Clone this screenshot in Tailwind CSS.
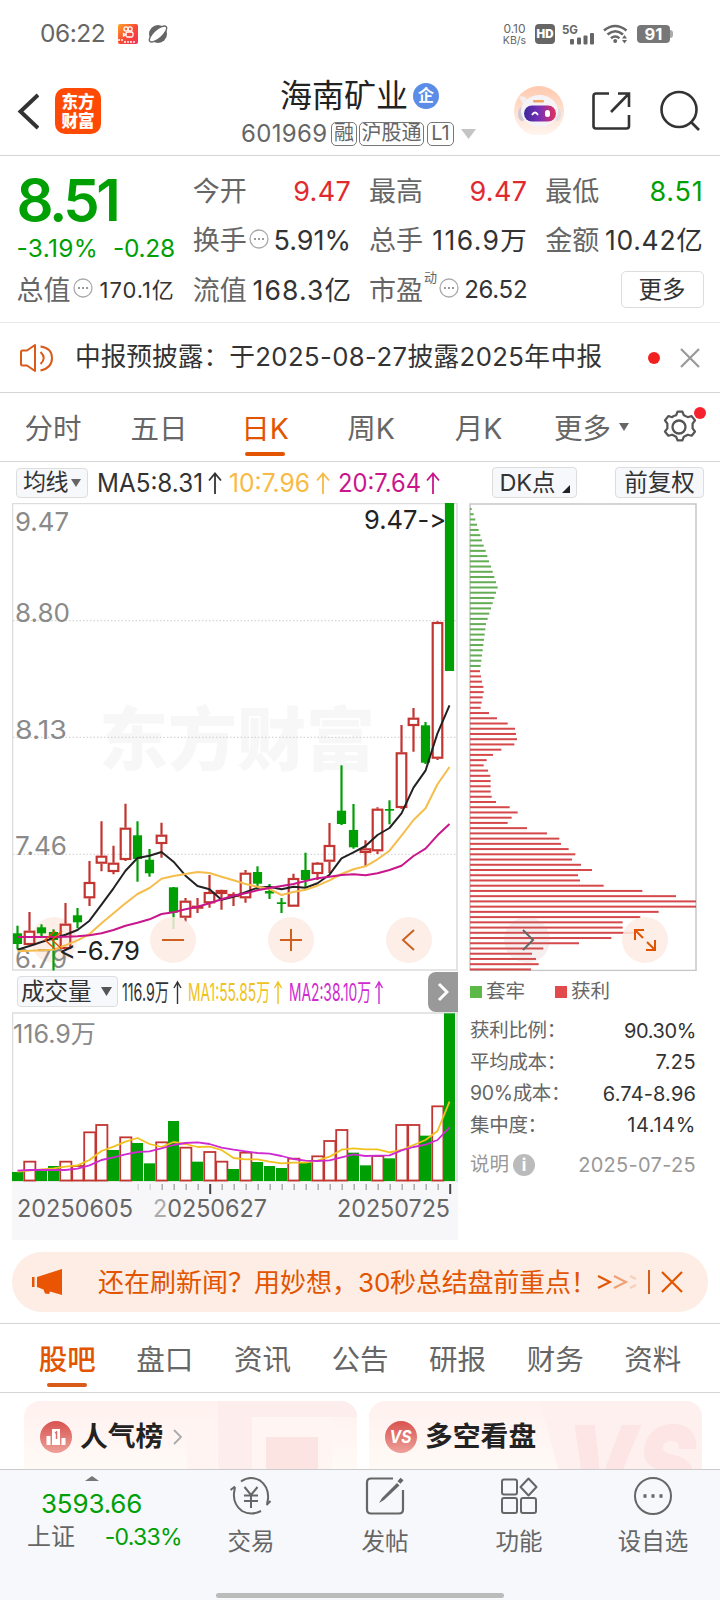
<!DOCTYPE html>
<html lang="zh-CN">
<head>
    <meta charset="UTF-8">
    <title>海南矿业 601969</title>
    <script src="https://cdn.jsdelivr.net/npm/@tailwindcss/browser@4"></script>
</head>
<body class="w-[720px] h-[1600px] overflow-hidden bg-white text-[#333] font-[Inter,'Noto_Sans_CJK_SC',sans-serif]">

    <!-- Status bar -->
    <div class="h-[68px] flex items-center pl-10 pr-[46px] text-[#666]">
        <span class="text-[24.500px] leading-none w-[66px] tracking-[-0.500px] whitespace-nowrap -mt-px">06:22</span>
        <svg class="ml-3 w-5 h-5" viewBox="0 0 20 20">
            <defs><linearGradient id="app" x1="0" x2="1" y2="1"><stop stop-color="#fda52c"/><stop offset=".5" stop-color="#fa4b32"/><stop offset="1" stop-color="#f52f54"/></linearGradient></defs>
            <rect width="20" height="20" rx="2" fill="url(#app)"/>
            <g fill="none" stroke="#fff" stroke-width="1.3"><circle cx="8" cy="5" r="2.1"/><circle cx="12" cy="5" r="2.1"/><rect x="8" y="8" width="7" height="5" rx="1.5"/><path d="M5.500 9.500l2 1-2 1.500z"/></g>
            <path d="M0 16h5M6 18h12" stroke="#fff" stroke-width="1.500" stroke-dasharray="2 1"/>
        </svg>
        <svg class="ml-2.5 w-5 h-5" viewBox="0 0 20 20">
            <circle cx="10" cy="10" r="9" fill="#666"/>
            <ellipse cx="10" cy="10" rx="11" ry="4.300" transform="rotate(-42 10 10)" fill="#fff" stroke="#666" stroke-width="1.400"/>
        </svg>
        <div class="ml-auto text-[12px] leading-[11px] text-center w-[25px] whitespace-nowrap">0.10<br><span class="text-[10.5px]">KB/s</span></div>
        <div class="ml-[8px] w-5 h-5 rounded-[4px] bg-[#666] text-white text-[11.500px] font-black leading-5 text-center">HD</div>
        <svg class="ml-[7px] w-[33px] h-[21px]" viewBox="0 0 33 21" fill="#666">
            <text x="0" y="9.500" font-size="12" font-weight="700" textLength="16" lengthAdjust="spacingAndGlyphs">5G</text>
            <rect x="8" y="15" width="4" height="5.500" rx="1"/><rect x="15" y="13.500" width="4" height="7" rx="1"/><rect x="21.500" y="11.500" width="4" height="9" rx="1"/><rect x="28" y="9" width="4" height="11.500" rx="1"/>
        </svg>
        <svg class="ml-2 w-[25px] h-5" viewBox="0 0 25 20">
            <g fill="none" stroke="#666" stroke-width="2.600"><path d="M1 6.500q11-9 22.500 0"/><path d="M4.500 10.500q8-6.500 15.500 0"/><path d="M8 14.200q4.200-3.400 8.400 0"/></g>
            <circle cx="12.200" cy="17" r="2" fill="#666"/><path d="M21.500 11l2.500 3.500h-5zM21.500 19.500l2.500-3.500h-5z" fill="#666"/>
        </svg>
        <div class="ml-[9px] mr-px w-[33px] h-[18px] rounded-[4px] bg-[#777] text-white text-[16.500px] font-bold leading-[18px] text-center">91</div>
        <div class="-ml-px mr-px w-[3px] h-2 rounded-r bg-[#aaa]"></div>
    </div>

    <!-- Header -->
    <header class="h-[88px] border-b border-[#d4d4d4] flex">
        <svg class="mt-6 ml-[17px] w-[22px] h-[38px]" viewBox="0 0 22 38" fill="none" stroke="#333" stroke-width="4"><path d="M21 3L3.500 19.500 21 36"/></svg>
        <div class="mt-5 ml-4 w-[46px] h-[46px] rounded-[10px] bg-[#ff4a06] text-white text-[16.500px] font-black leading-[19px] text-center pt-[4px] font-['Noto_Sans_CJK_SC',sans-serif]">东方<br>财富</div>
        <div class="ml-[139px] w-[240px]">
            <div class="flex items-center ml-[40px] h-[55px]">
                <h1 class="text-[32px] text-[#222] leading-none whitespace-nowrap">海南矿业</h1>
                <span class="ml-[5px] w-[26px] h-[26px] rounded-full bg-[#5b8ce8] text-white text-[16px] font-bold leading-[25px] text-center">企</span>
            </div>
            <div class="flex items-center h-6 -mt-px text-[#666] text-[24px] leading-none whitespace-nowrap">
                <span class="w-[91px] tracking-[0.350px] pl-px">601969</span>
                <span class="h-6 w-[26px] border border-[#777] rounded-[5px] text-[20px] leading-[21px] text-center">融</span>
                <span class="ml-[2px] h-6 w-[65px] border border-[#777] rounded-[5px] text-[20px] leading-[21px] text-center">沪股通</span>
                <span class="ml-[3px] h-6 w-[27px] border border-[#777] rounded-[5px] text-[20px] leading-[21px] text-center">L1</span>
                <svg class="ml-[7px] w-[15px] h-2.5 shrink-0" viewBox="0 0 15 10"><path d="M0 0h15L7.500 10z" fill="#c4c4c4"/></svg>
            </div>
        </div>
        <svg class="mt-[17px] ml-[33px] w-[52px] h-[50px] shrink-0" viewBox="0 0 52 50">
            <defs>
                <linearGradient id="halo" y2="1" x2="0"><stop stop-color="#ffc9ae"/><stop offset="1" stop-color="#fff6f0"/></linearGradient>
                <linearGradient id="visor"><stop stop-color="#3b2a9c"/><stop offset=".5" stop-color="#7b2fb5"/><stop offset="1" stop-color="#e8305a"/></linearGradient>
            </defs>
            <circle cx="26" cy="26" r="25" fill="url(#halo)"/>
            <ellipse cx="9" cy="29" rx="4" ry="7" fill="#cfc9d6"/><ellipse cx="44" cy="29" rx="4" ry="7" fill="#e4dde2"/>
            <path d="M6 12q5-2 8 2l-4 5z" fill="#f3eef0"/>
            <ellipse cx="26.500" cy="26" rx="18.500" ry="16" fill="#f6f3f6"/>
            <rect x="20" y="15" width="11" height="2.500" rx="1" fill="#f0a565"/>
            <rect x="11" y="20.500" width="32" height="16" rx="8" fill="url(#visor)"/>
            <path d="M19 30q3-5 6 0" stroke="#fff" stroke-width="1.800" fill="none"/><rect x="32" y="25" width="5" height="7" rx="2.500" fill="#fff"/>
        </svg>
        <svg class="mt-[22px] ml-[26px] w-[42px] h-[42px] shrink-0" viewBox="0 0 42 42" fill="none" stroke="#333" stroke-width="2.600"><path d="M18 3.500H5Q2.500 3.500 2.500 6v30q0 2.500 2.500 2.500h30.500q2.500 0 2.500-2.500V25"/><path d="M27 3.500h11V17M38 3.500L20 22"/></svg>
        <svg class="mt-[22px] ml-[26px] w-[42px] h-[42px] shrink-0" viewBox="0 0 42 42" fill="none" stroke="#333" stroke-width="2.600"><circle cx="20" cy="19.500" r="17.500"/><path d="M32 32l8 8"/></svg>
    </header>

    <!-- Quote -->
    <section class="h-[167px] border-b border-[#e8e8e8] px-[16.500px] pt-[11px] grid grid-cols-4 grid-rows-[49px_49px_50px] gap-x-[18px] text-[27px] leading-none whitespace-nowrap">
        <div class="row-span-2 text-[#00a005]">
            <div class="text-[58px] font-semibold h-[65px] pt-[4px] tracking-[-3.500px]">8.51</div>
            <div class="flex justify-between text-[24.500px] pt-[4px]"><span class="tracking-[0.300px]">-3.19%</span><span class="tracking-[-0.300px]">-0.28</span></div>
        </div>
        <div class="flex items-center justify-between"><span class="text-[#666]">今开</span><span class="text-[#e12a2e] tracking-[0.300px]">9.47</span></div>
        <div class="flex items-center justify-between"><span class="text-[#666]">最高</span><span class="text-[#e12a2e] tracking-[0.300px]">9.47</span></div>
        <div class="flex items-center justify-between"><span class="text-[#666]">最低</span><span class="text-[#00a005] tracking-[0.800px]">8.51</span></div>
        <div class="flex items-center justify-between"><span class="flex items-center text-[#666]">换手<svg class="w-5 h-5 ml-[2px] -mt-1" viewBox="0 0 20 20"><circle cx="10" cy="10" r="9" fill="none" stroke="#aaa" stroke-width="1.300"/><path d="M5 10h2M9 10h2M13 10h2" stroke="#999" stroke-width="1.800"/></svg></span><span>5.91%</span></div>
        <div class="flex items-center justify-between"><span class="text-[#666]">总手</span><span class="text-[26.500px] tracking-[1.400px] -mr-[1px]">116.9万</span></div>
        <div class="flex items-center justify-between"><span class="text-[#666]">金额</span><span class="text-[26.500px] tracking-[0.700px]">10.42亿</span></div>
        <div class="flex items-center justify-between"><span class="flex items-center text-[#666]">总值<svg class="w-5 h-5 ml-[2px] -mt-1" viewBox="0 0 20 20"><circle cx="10" cy="10" r="9" fill="none" stroke="#aaa" stroke-width="1.300"/><path d="M5 10h2M9 10h2M13 10h2" stroke="#999" stroke-width="1.800"/></svg></span><span class="text-[22px] tracking-[0.900px]">170.1亿</span></div>
        <div class="flex items-center justify-between"><span class="text-[#666]">流值</span><span class="text-[26.500px] tracking-[1.100px] -mr-[1px]">168.3亿</span></div>
        <div class="flex items-center justify-between"><span class="flex items-center text-[#666]">市盈<span class="text-[13px] self-start -mt-1.5 ml-px">动</span><svg class="w-5 h-5 ml-[2px] -mt-1" viewBox="0 0 20 20"><circle cx="10" cy="10" r="9" fill="none" stroke="#aaa" stroke-width="1.300"/><path d="M5 10h2M9 10h2M13 10h2" stroke="#999" stroke-width="1.800"/></svg></span><span class="text-[24px] tracking-[-0.300px]">26.52</span></div>
        <div class="flex items-center justify-end"><button class="-mt-px w-[83px] h-[37px] border border-[#ddd] rounded-[5px] text-[23.500px] leading-none">更多</button></div>
    </section>

    <!-- Notice -->
    <section class="h-[70px] border-b border-[#d4d4d4] flex items-center">
        <svg class="ml-[19px] w-[35px] h-[30px]" viewBox="0 0 35 30" fill="none" stroke="#d95b1a" stroke-width="2"><path d="M16 2L8 7.500H3.500Q2 7.500 2 9v12q0 1.500 1.500 1.500H8l8 5.500z" stroke-linejoin="round"/><path d="M21.500 9q6.500 6 0 12M21.500 3.500Q33 5 33 15T21.500 27.500"/></svg>
        <p class="ml-[21px] -mt-px text-[25.700px] leading-none whitespace-nowrap w-[541px]">中报预披露：<span class="tracking-[0.400px]">于2025-08-27披露2025年中报</span></p>
        <span class="ml-[32px] w-3 h-3 rounded-full bg-[#f0211f]"></span>
        <svg class="ml-5 w-5 h-5" viewBox="0 0 20 20" stroke="#999" stroke-width="2.200"><path d="M1 1l18 18M19 1L1 19"/></svg>
    </section>

    <!-- Period tabs -->
    <nav class="h-[69px] border-b border-[#d4d4d4] flex text-[28.500px] leading-none text-[#666] whitespace-nowrap">
        <span class="w-[106px] text-center pt-[22px]">分时</span>
        <span class="w-[106px] text-center pt-[22px]">五日</span>
        <span class="w-[106px] flex flex-col items-center text-[#e35400] pt-[22px]">日K<i class="mt-[8px] w-10 h-1 rounded bg-[#e35400]"></i></span>
        <span class="w-[106px] text-center pt-[22px]">周K</span>
        <span class="w-[109px] text-center pt-[22px]">月K</span>
        <span class="ml-[21px] pt-[22px]">更多</span>
        <svg class="mt-[30px] ml-2 w-2.5 h-2" viewBox="0 0 10 8"><path d="M0 0h10L5 8z" fill="#666"/></svg>
        <svg class="mt-2 ml-[29px] w-12 h-12" viewBox="0 0 48 48" fill="none" stroke="#555" stroke-width="2.300" stroke-linejoin="round">
            <path d="M17 11l3-1 1.500-4h5l1.500 4 4 2 4-1.200 3.500 4.700-2.500 3.500v5l2.500 3.500-3.500 4.500-4-1-4 2-1.500 4h-5l-1.500-4-4-2-4 1-3.500-4.500 2.500-3.500v-5l-2.500-3.500 3.500-4.700 4 1.200z" transform="translate(-1.300 5) scale(.97 .93)"/><circle cx="21" cy="26" r="6.500"/>
            <circle cx="42" cy="12" r="6" fill="#f5222d" stroke="none"/>
        </svg>
    </nav>

    <!-- Indicator row -->
    <div class="h-[41px] flex items-center pl-4 text-[24px] leading-none whitespace-nowrap">
        <button class="w-[72px] h-[30px] border border-[#ddd] rounded-[4px] bg-[#f6f8fb] text-[23px] leading-none flex items-center justify-center tracking-[-0.500px]">均线<svg class="w-2.5 h-2 ml-[3px]" viewBox="0 0 10 8"><path d="M0 0h10L5 8z" fill="#666"/></svg></button>
        <svg class="ml-[7px] w-[350px] h-[30px]" viewBox="96 468 350 30" font-size="25">
            <text x="98" y="492" fill="#333" textLength="106" lengthAdjust="spacingAndGlyphs">MA5:8.31</text>
            <text x="230" y="492" fill="#f7ba45" textLength="81" lengthAdjust="spacingAndGlyphs">10:7.96</text>
            <text x="339" y="492" fill="#c9168b" textLength="83" lengthAdjust="spacingAndGlyphs">20:7.64</text>
            <g fill="none" stroke-width="1.800"><path stroke="#333" d="M216 494V474m-6 6.500l6-7 6 7"/><path stroke="#f7ba45" d="M324 494V474m-6 6.500l6-7 6 7"/><path stroke="#c9168b" d="M434 494V474m-6 6.500l6-7 6 7"/></g>
        </svg>
        <button class="ml-[47px] w-[85px] h-[31px] border border-[#ddd] rounded-[4px] bg-[#f6f8fb] text-[23.500px] leading-none flex items-center justify-center">DK点<svg class="w-2 h-2 ml-1.5 mt-3" viewBox="0 0 8 8"><path d="M8 0v8H0z" fill="#222"/></svg></button>
        <button class="ml-[38px] w-[89px] h-[31px] border border-[#ddd] rounded-[4px] bg-[#f6f8fb] text-[23.500px] leading-none">前复权</button>
    </div>

    <!-- Charts -->
    <main class="flex h-[737px] pl-3">
        <div class="w-[447px]">
            <svg id="kline" class="block w-[447px] h-[468px] [font-variant-ligatures:none] [font-feature-settings:'calt'_0]" viewBox="12 503 447 468"></svg>
            <div class="h-[41px] flex items-center pl-[5px]">
                <button class="w-[101px] h-[31px] border border-[#ddd] rounded-[4px] bg-[#f6f8fb] text-[23.500px] leading-none flex items-center justify-between pl-[3px] pr-[5px]">成交量<svg class="w-[11px] h-[9px]" viewBox="0 0 10 8"><path d="M0 0h10L5 8z" fill="#555"/></svg></button>
                <svg class="ml-1 w-[270px] h-[36px]" viewBox="122 974 270 36" font-size="24">
                    <text x="122" y="1001" fill="#333" textLength="47" lengthAdjust="spacingAndGlyphs">116.9万</text>
                    <text x="188" y="1001" fill="#efc21c" textLength="82" lengthAdjust="spacingAndGlyphs">MA1:55.85万</text>
                    <text x="289" y="1001" fill="#cf2ad0" textLength="82" lengthAdjust="spacingAndGlyphs">MA2:38.10万</text>
                    <g fill="none" stroke-width="1.400"><path stroke="#333" d="M177.500 1004V982m-3.500 6l3.500-6 3.500 6"/><path stroke="#efc21c" d="M278 1004V982m-3.500 6l3.500-6 3.500 6"/><path stroke="#cf2ad0" d="M379 1004V982m-3.500 6l3.500-6 3.500 6"/></g>
                </svg>
                <div class="ml-auto w-[30px] h-10 rounded-l-lg bg-[#999] flex items-center justify-center mr-px"><svg class="w-3 h-5" viewBox="0 0 12 20" fill="none" stroke="#fff" stroke-width="3"><path d="M2 2l8 8-8 8"/></svg></div>
            </div>
            <svg id="volume" class="block w-[447px] h-[228px]" viewBox="12 1012 447 228"></svg>
        </div>
        <div class="ml-[10px] w-[229px]">
            <svg id="chips" class="block w-[229px] h-[468px]" viewBox="469 503 229 468"></svg>
            <div class="flex items-center h-[41px] pl-px text-[19.500px] leading-none text-[#666]">
                <i class="w-3 h-3 bg-[#5cb948]"></i><span class="ml-1 w-[69px]">套牢</span>
                <i class="w-3 h-3 bg-[#e34a4c]"></i><span class="ml-1">获利</span>
            </div>
            <dl class="pl-px pr-[2px] pt-[3px] text-[20px] text-[#333] whitespace-nowrap">
                <div class="flex justify-between h-[31.500px] items-center"><dt class="text-[#666] text-[19.500px] tracking-[-0.300px]">获利比例：</dt><dd class="tracking-[-0.400px]">90.30%</dd></div>
                <div class="flex justify-between h-[31.500px] items-center"><dt class="text-[#666] text-[19.500px] tracking-[-0.300px]">平均成本：</dt><dd class="tracking-[0.400px]">7.25</dd></div>
                <div class="flex justify-between h-[31.500px] items-center"><dt class="text-[#666] text-[19.500px] tracking-[-0.300px]">90%成本：</dt><dd class="tracking-[0.150px]">6.74-8.96</dd></div>
                <div class="flex justify-between h-[31.500px] items-center"><dt class="text-[#666] text-[19.500px] tracking-[-0.300px]">集中度：</dt><dd class="tracking-[0.600px]">14.14%</dd></div>
                <div class="flex justify-between mt-2 h-[31px] items-center text-[#999]"><dt class="flex items-center text-[19.500px]">说明<span class="ml-1 w-[22px] h-[22px] rounded-full bg-[#bbb] text-white font-bold text-[17px] leading-[22px] text-center">i</span></dt><dd class="tracking-[0.300px]">2025-07-25</dd></div>
            </dl>
        </div>
    </main>

    <!-- Banner -->
    <div class="mx-3 mt-3 h-[60px] rounded-full bg-[#fdede4] flex items-center text-[#e35400]">
        <svg class="ml-5 w-[31px] h-[27px]" viewBox="0 0 31 27" fill="#ea5504"><path d="M0 8h2.500v10H0zM5 8L30 0v26l-12-3.500-1 2.500-4-.5-1.500-4L5 18z"/></svg>
        <p class="ml-[35px] mt-px w-[499px] text-[26px] leading-none whitespace-nowrap">还在刷新闻？用妙想，<span class="tracking-[-0.200px]">30秒总结盘前重点！</span></p>
        <svg class="w-[42px] h-4" viewBox="0 0 42 16" fill="none" stroke="#e35400" stroke-width="2"><path d="M1 2l12 6-12 6"/><path opacity=".5" d="M17 2l12 6-12 6"/><path opacity=".2" d="M33 2l6 3M33 14l6-3"/></svg>
        <i class="ml-[9px] w-[1.500px] h-6 bg-[#d0601f]"></i>
        <svg class="ml-[11px] w-[22px] h-[22px]" viewBox="0 0 22 22" stroke="#e35400" stroke-width="2.200"><path d="M1 1l20 20M21 1L1 21"/></svg>
    </div>

    <!-- Info tabs -->
    <nav class="mt-[11px] h-[70px] border-y border-[#d4d4d4] px-[18.500px] grid grid-cols-7 text-[28.500px] leading-none text-[#666] text-center pt-[22px] whitespace-nowrap">
        <span class="text-[#e35400] font-medium flex flex-col items-center">股吧<i class="mt-[8px] w-10 h-1 rounded bg-[#d95b1a]"></i></span>
        <span>盘口</span><span>资讯</span><span>公告</span><span>研报</span><span>财务</span><span>资料</span>
    </nav>

    <div class="h-[76px] pt-2 pl-6 flex gap-3 text-[27.800px] font-bold text-[#222] whitespace-nowrap">
        <div class="relative shrink-0 w-[333px] h-[68px] rounded-t-2xl bg-gradient-to-b from-[#fff1ef] to-[#fffaf6] overflow-hidden flex items-center pl-4 pt-1">
            <svg class="absolute right-0 top-0 w-[180px] h-[68px]" viewBox="0 0 180 68"><path d="M10 22h30v46H10z" fill="#fff4f2"/><path d="M41 0h139v16H75v52H41z" fill="#fdeeed"/><path d="M75 16h80v52H75z" fill="#fff6f4"/><path d="M89 36h52v32H89z" fill="#fce4e3"/></svg>
            <svg class="relative w-8 h-8" viewBox="0 0 32 32"><defs><linearGradient id="badge" x2="0" y2="1"><stop stop-color="#d9534f"/><stop offset="1" stop-color="#eda09a"/></linearGradient></defs><circle cx="16" cy="16" r="16" fill="url(#badge)"/><path d="M6.500 15h4v9h-4zM12 8h8v16h-8zM21.500 17h4v7h-4z" fill="#fff"/><path d="M15 12l1.500-1v7" fill="none" stroke="#dd6a66" stroke-width="1.500"/></svg>
            <span class="relative ml-2">人气榜</span>
            <svg class="relative ml-2.5 w-[9px] h-4" viewBox="0 0 9 16" fill="none" stroke="#aaa" stroke-width="1.800"><path d="M1 1l7 7-7 7"/></svg>
        </div>
        <div class="relative shrink-0 w-[333px] h-[68px] rounded-t-2xl bg-gradient-to-b from-[#fff1ef] to-[#fffaf6] overflow-hidden flex items-center pl-4 pt-1">
            <svg class="absolute right-0 top-0 w-[180px] h-[68px]" viewBox="0 0 180 68"><path d="M18 0h162v68H36z" fill="#fdf0ef"/><text x="44" y="100" font-size="105" font-weight="900" font-style="italic" fill="#fce5e4" textLength="130" lengthAdjust="spacingAndGlyphs">VS</text></svg>
            <svg class="relative w-8 h-8" viewBox="0 0 32 32"><circle cx="16" cy="16" r="16" fill="url(#badge)"/><text x="4.500" y="22" font-size="17" font-weight="700" font-style="italic" fill="#fff" textLength="22" lengthAdjust="spacingAndGlyphs">VS</text></svg>
            <span class="relative ml-2">多空看盘</span>
        </div>
    </div>

    <!-- Bottom bar -->
    <footer class="h-[132px] bg-[#f6f8fb] border-t border-[#ccc] relative flex text-[24px] leading-none text-[#666] whitespace-nowrap">
        <div class="w-[184px] pl-[27px] pt-[6px]">
            <svg class="ml-[58px] w-3.5 h-[5px]" viewBox="0 0 14 5"><path d="M0 5l7-5 7 5z" fill="#777"/></svg>
            <div class="ml-[14px] mt-[10px] text-[#00a005] text-[26px] tracking-[-0.200px]">3593.66</div>
            <div class="mt-2 flex items-center justify-between"><span>上证</span><span class="text-[#00a005] text-[23px] tracking-[-0.700px] mr-[2px]">-0.33%</span></div>
        </div>
        <div class="w-[134px] pt-[6px] flex flex-col items-center">
            <svg class="w-[46px] h-[40px]" viewBox="0 0 46 40" fill="none" stroke="#666" stroke-width="2"><path d="M13 5.500Q22-1 32 4.500 41 11 40 23l-1 5M42.500 25l-4 4M33 35q-10 5-19 0-9-7-8-18l1-6M2.500 14l4.500-3.500M16.500 11l6.500 8 6.500-8M16 19.500h14M16 25h14M23 19v13"/></svg>
            <span class="mt-[14px] text-[23.500px]">交易</span>
        </div>
        <div class="w-[134px] pt-[6px] flex flex-col items-center">
            <svg class="w-[40px] h-[40px]" viewBox="0 0 40 40" fill="none" stroke="#666" stroke-width="2.200"><path d="M28 2.500H6Q2 2.500 2 6.500v27q0 4 4 4h28q4 0 4-4V14"/><path d="M14 27l3-5L32 7l2.500 2.500L19 24z" fill="#666" stroke="none"/><path d="M34 6.500l3-3.500" stroke-width="4"/></svg>
            <span class="mt-[14px] text-[23.500px]">发帖</span>
        </div>
        <div class="w-[134px] pt-[6px] flex flex-col items-center">
            <svg class="w-[38px] h-[40px]" viewBox="0 0 38 40" fill="none" stroke="#666" stroke-width="2"><rect x="2" y="3.500" width="15" height="15" rx="2"/><rect x="2" y="22" width="15" height="15" rx="2"/><rect x="21" y="22" width="15" height="15" rx="2"/><path d="M28.500 2.500l8 8.500-8 8.500-8-8.500z" stroke-linejoin="round"/></svg>
            <span class="mt-[14px] text-[23.500px]">功能</span>
        </div>
        <div class="w-[134px] pt-[6px] flex flex-col items-center">
            <svg class="w-[40px] h-[40px]" viewBox="0 0 40 40" fill="none" stroke="#666" stroke-width="2"><circle cx="20" cy="20" r="18"/><path d="M10.500 20h3M18.500 20h3M26.500 20h3" stroke-width="3.500"/></svg>
            <span class="mt-[14px] text-[23.500px]">设自选</span>
        </div>
        <i class="absolute left-[216px] top-[123px] w-[288px] h-[5px] rounded-full bg-[#bbb]"></i>
    </footer>

    <script>
    const RED = '#c23531', GREEN = '#00a005';
    const barX = i => 17.5 + i * 12;
    const line = (ys, color, w = 2) =>
        `<polyline fill="none" stroke="${color}" stroke-width="${w}" stroke-linejoin="round" points="${ys.map((y, i) => barX(i) + ',' + y).join(' ')}"/>`;
    const label = (x, y, size, width, color, text) =>
        `<text x="${x}" y="${y}" font-size="${size}" fill="${color}" textLength="${width}" lengthAdjust="spacingAndGlyphs">${text}</text>`;
    const disc = (x, d, fill = '#fdece3', stroke = '#d0601f') =>
        `<circle cx="${x}" cy="940" r="23" fill="${fill}" fill-opacity=".85"/><path transform="translate(${x} 940)" d="${d}" fill="none" stroke="${stroke}" stroke-width="2"/>`;

    // [up, high, body top, body bottom, low]
    const candles = [
        [0,925.7,933.3,944,949.3],[1,912,930.7,945,945],[0,924.3,927.3,933.3,936.7],[0,929.3,932,940,970.5],
        [1,903,923.7,949,949],[0,908,915.3,922.3,928.3],[1,861,882,898.3,906],[1,821.3,855.7,863.7,871.3],
        [1,845.7,862.7,872,874.3],[1,803.7,827.7,860,861],[0,821.3,835.3,859,881.7],[0,849,859.7,873.3,876.7],
        [1,822.7,834.7,844,857.7],[0,887,887.3,912.7,929],[1,898,900.7,917.7,922],[1,898,905.7,908.3,913],
        [1,875,892,903.3,907.7],[1,889.7,890,894,909.7],[1,892.3,894,897,906],[1,870,872.7,898.3,902.7],
        [0,866.3,872,883.7,890],[0,884,891,893.5,899],[0,898,902.3,904,913],[1,873.7,878,906.7,906.7],
        [0,852.7,870,880,888],[1,862,862.7,874,880],[1,823,845,861.7,873],[0,765.3,810.7,824,825],
        [0,804,830,847.3,848.7],[1,840.3,848.3,853,866.7],[1,807.3,808.7,851.3,854],[0,800.3,809,810.7,824.3],
        [1,725,752.3,808,809],[1,708,717.7,726,751.7],[0,722,725.3,762.7,764],[1,621.3,622,758.7,760],[0,503,503,671,671]
    ];
    const ma5 = [949.7,946,942,938.3,934.7,930,920.7,904.7,888.3,870.7,858,855.7,852,861.7,875.7,886,889.3,899.7,896.7,892.3,887.7,886.7,889.3,886.7,887.7,883.3,874.7,858.3,852.3,846,835,828,813.3,787.7,770.7,733.3,705.3];
    const ma10 = [951.3,950.7,950.3,949.7,945.3,940.3,934,923.3,913.3,903.3,894,888,878.7,876,874,872,873,876.7,880.3,884,886.7,889,895,892,889.7,885.7,880.3,874,869.3,866.3,859.3,850.7,835.7,820,808.3,784.3,767];
    const ma20 = [937,937,937,937,936.7,936.3,935.3,933.3,930,925.7,922.7,919.3,914,912.3,909.3,906.7,903.3,899.3,895.7,893.3,890.3,888,886,884,881,878.3,876.7,875,874.3,875.3,873.3,870,865.7,856,848.7,835.3,824];

    let k = '<text x="99" y="765" font-size="69" font-weight="900" fill="#f7f7f7" textLength="276">东方财富</text>';
    k += '<path d="M12.500 970V503.500H457V970z" fill="none" stroke="#ddd" stroke-width="1.600"/>';
    [620.7, 737.3, 854.3].forEach(y => k += `<path d="M13 ${y}h444" stroke="#ccc" stroke-dasharray="1.500 2"/>`);
    k += disc(54, '');
    k += label(15, 531, 26, 54, '#8a8a8a', '9.47') + label(15, 622, 26, 55, '#8a8a8a', '8.80') + label(15, 739, 26, 52, '#8a8a8a', '8.13') + label(15, 855, 26, 52, '#8a8a8a', '7.46') + label(15, 968, 26, 52, '#8a8a8a', '6.79');
    candles.forEach(([up, hi, top, bottom, lo], i) => {
        const x = barX(i), c = up ? RED : GREEN;
        if (up) {
            k += `<path d="M${x} ${hi}V${top}M${x} ${bottom}V${lo}" stroke="${c}" stroke-width="2.200"/>`;
            k += `<rect x="${x - 4.8}" y="${top + 1}" width="9.6" height="${Math.max(bottom - top - 2, 1)}" fill="none" stroke="${c}" stroke-width="2.200"/>`;
        } else {
            k += `<path d="M${x} ${hi}V${lo}" stroke="${c}" stroke-width="2.200"/><rect x="${x - 4.6}" y="${top}" width="9.2" height="${bottom - top}" fill="${c}"/>`;
        }
    });
    k += line(ma5, '#222') + line(ma10, '#f5bd4c') + line(ma20, '#c9168b');
    k += '<path d="M62 931l-10 9 10 9M55 931l-10 9 10 9" fill="none" stroke="#e35400" stroke-width="1.500"/>';
    k += disc(173, 'M-11 0h22') + disc(291, 'M-11 0h22M0-11v22') + disc(409, 'M5-10L-6 0 5 10');
    k += label(364, 529, 26, 82, '#222', '9.47-&gt;') + label(59, 960, 26, 81, '#222', '&lt;-6.79');
    document.getElementById('kline').innerHTML = k;

    const ups = '0100111101001010110100010111001011010'.split('').map(Number);
    const tops = [606,575,602,588,575,588,487,465,540,502,519,580,517,453,533,575,546,575,597,548,576,588,594,566,576,559,513,480,548,586,558,565,465,465,497,409,130];
    const vma1 = [605,602,598,595,590,586,570,543,530,515,504,522,531,516,522,531,530,540,564,568,568,575,580,578,578,572,560,539,535,538,538,547,540,525,510,483,395];
    const vma2 = [602,600,600,600,600,596,586,570,562,553,546,544,535,525,519,517,522,533,539,544,549,551,558,567,572,573,571,562,553,558,557,556,541,531,524,510,472];
    const toY = v => 970 + v / 3;
    let v = '<path d="M12 1182h446v58H12z" fill="#f7f7f9"/><path d="M12.500 1181V1013H457v168z" fill="none" stroke="#ddd" stroke-width="1.600"/>';
    v += label(13, 1043, 25, 83, '#8a8a8a', '116.9万');
    tops.forEach((t, i) => {
        const x = barX(i), y = toY(t);
        v += ups[i]
            ? `<rect x="${x - 5.3}" y="${y}" width="11.2" height="${1180.5 - y}" fill="#fff" stroke="${RED}" stroke-width="1.8"/>`
            : `<rect x="${x - 5.5}" y="${y}" width="11" height="${1181 - y}" fill="${GREEN}"/>`;
    });
    v += line(vma1.map(toY), '#efc21c', 1.8) + line(vma2.map(toY), '#cf2ad0', 1.8);
    for (let i = 10; i <= 36; i++) {
        const major = i === 16 || i === 36;
        v += `<path d="M${barX(i) + .7} 1184v${major ? 10 : 6}" stroke="${major ? '#444' : '#aaa'}" stroke-width="${major ? 2 : 1.5}" opacity="${i < 12 ? .4 : 1}"/>`;
    }
    v += label(17, 1217, 24, 116, '#666', '20250605') + label(153, 1217, 24, 114, '#666', '<tspan fill="#aaa">2</tspan>0250627') + label(337, 1217, 24, 113, '#666', '20250725');
    document.getElementById('volume').innerHTML = v;

    // Chip distribution: trapped above the close, profitable below
    const trapped = [5,11,16,21,26,31,36,41,47,52,57,63,68,73,78,83,78,73,68,63,58,53,48,46,44,42,40,38,36,34,32];
    const profit = [30,33,36,40,41,38,35,32,57,81,113,135,138,141,133,94,69,50,41,54,61,62,62,62,65,78,119,143,125,113,171,231,268,273,296,316,306,333,366,324,330,401,517,618,678,678,566,511,458,458,498,424,327,220,186,198,206,183];
    let c = '<path d="M470 504H696V970.500H470z" fill="none" stroke="#c6c6c6" stroke-width="1.500"/>';
    trapped.concat(profit).forEach((len, i) => {
        c += `<rect x="470" y="${508 + i * 5.232}" width="${len / 3}" height="2" fill="${i < trapped.length ? '#65ac56' : '#d5494b'}"/>`;
    });
    c += disc(527, 'M-4-10L6 0l-10 10', 'rgba(190,130,130,.15)', '#666') + disc(645, 'M-2-2l-8-8M-10 0v-10h9M2 2l8 8M10 0v10H1', '#fdece3', '#e35400');
    document.getElementById('chips').innerHTML = c;
    </script>
</body>
</html>
